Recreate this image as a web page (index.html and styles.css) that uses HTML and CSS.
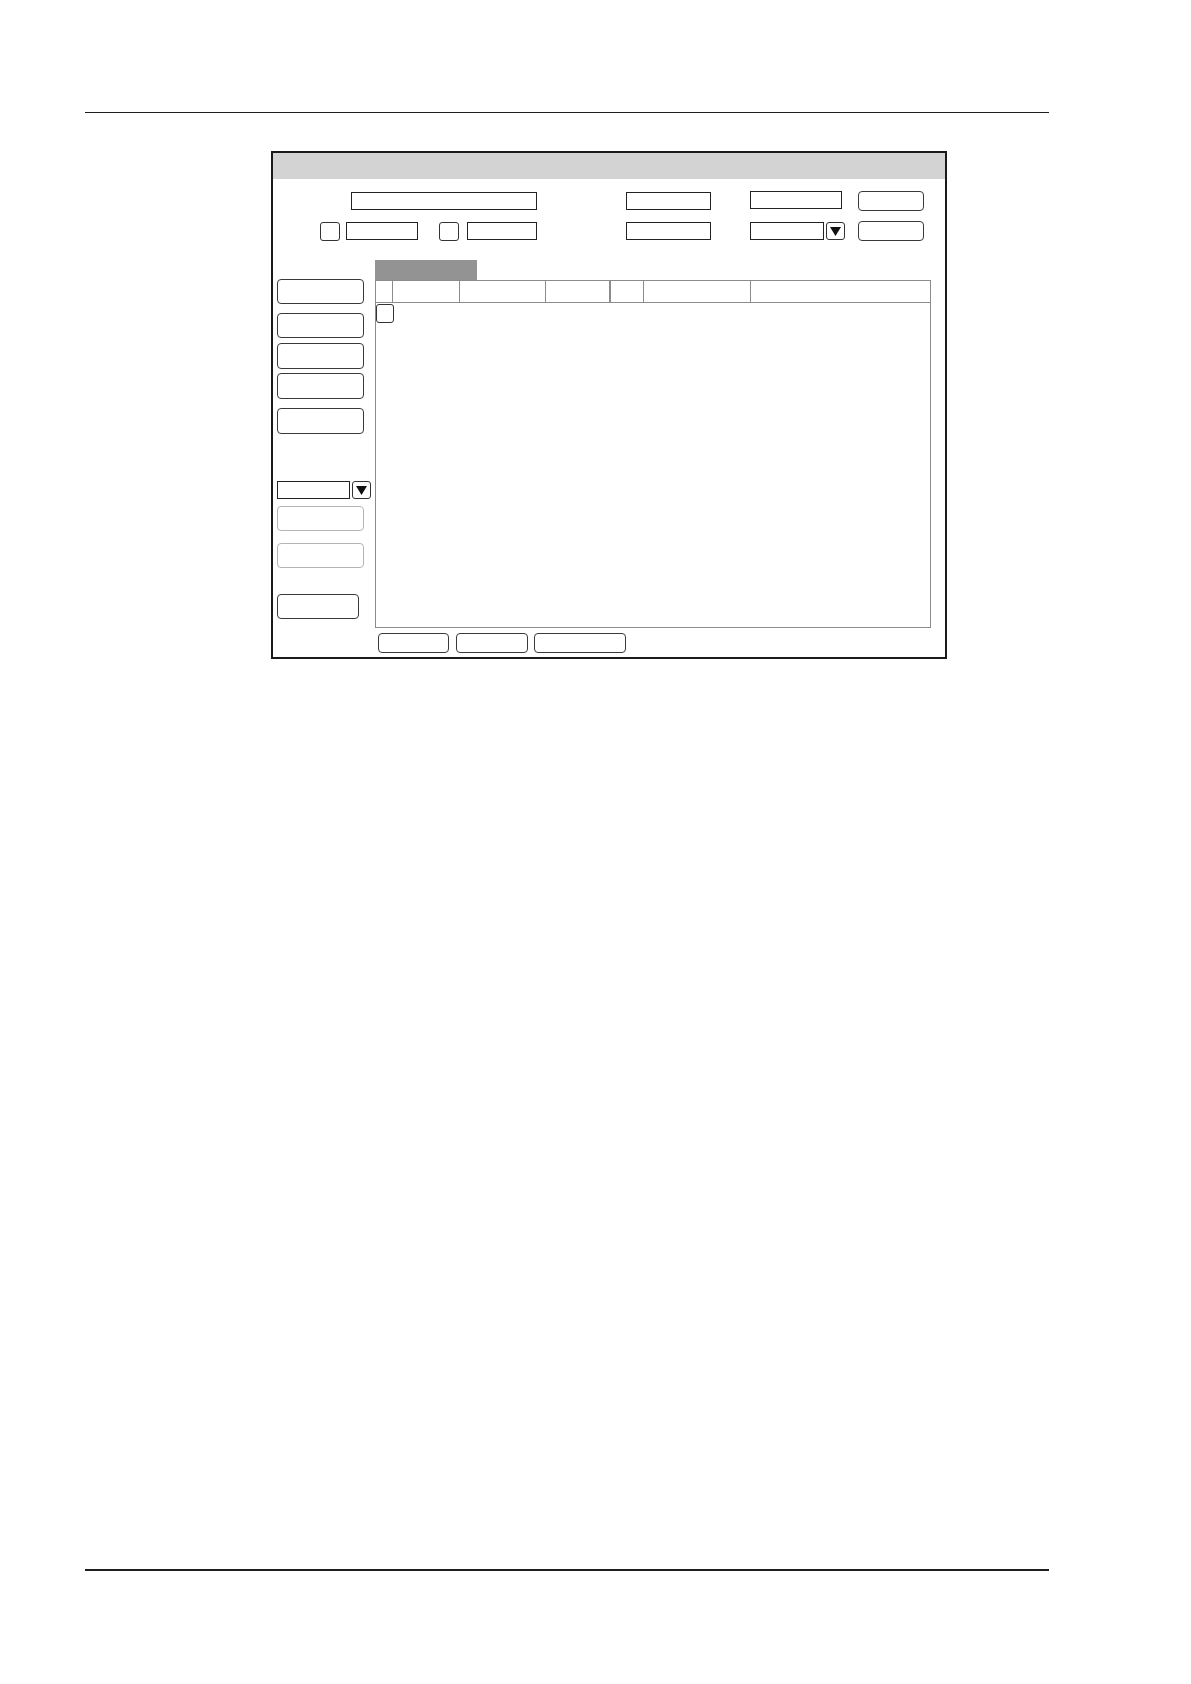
FILE: index.html
```html
<!DOCTYPE html>
<html>
<head>
<meta charset="utf-8">
<link rel="stylesheet" href="styles.css">
</head>
<body>
<div class="page">
  <div class="rule-top"></div>
  <div class="window">
    <div class="titlebar"></div>
    <div class="form">
      <div class="cell c1 r1"><div class="field long"></div></div>
      <div class="cell c1 r2">
        <div class="check"></div><div class="field f72"></div>
        <div class="check second"></div><div class="field f70"></div>
      </div>
      <div class="cell c2 r1"><div class="field f85"></div></div>
      <div class="cell c2 r2"><div class="field f85"></div></div>
      <div class="cell c3 r1"><div class="field f92 up"></div></div>
      <div class="cell c3 r2">
        <div class="field f74"></div>
        <div class="arrow"><svg width="11" height="9" viewBox="0 0 11 9"><polygon points="0,0 11,0 5.5,9" fill="#111"/></svg></div>
      </div>
      <div class="cell c4 r1"><div class="btn b65"></div></div>
      <div class="cell c4 r2"><div class="btn b65"></div></div>
    </div>
    <div class="main">
      <div class="side">
        <div class="btn side-btn s1"></div>
        <div class="btn side-btn s2"></div>
        <div class="btn side-btn s3 tall"></div>
        <div class="btn side-btn s4 tall"></div>
        <div class="btn side-btn s5 tall"></div>
        <div class="combo">
          <div class="field f73"></div>
          <div class="arrow"><svg width="11" height="9" viewBox="0 0 11 9"><polygon points="0,0 11,0 5.5,9" fill="#111"/></svg></div>
        </div>
        <div class="btn side-btn disabled d1"></div>
        <div class="btn side-btn disabled d2"></div>
        <div class="btn side-btn last"></div>
      </div>
      <div class="content">
        <div class="tab"></div>
        <div class="table">
          <div class="thead">
            <div class="th w17"></div>
            <div class="th w67"></div>
            <div class="th w86"></div>
            <div class="th w65 thick"></div>
            <div class="th w33"></div>
            <div class="th w107"></div>
            <div class="th rest"></div>
          </div>
          <div class="row"><div class="check small"></div></div>
        </div>
        <div class="actions">
          <div class="btn a71"></div>
          <div class="btn a72"></div>
          <div class="btn a92"></div>
        </div>
      </div>
    </div>
  </div>
  <div class="rule-bottom"></div>
</div>
</body>
</html>
```

FILE: styles.css
```css
html, body {
  margin: 0;
  padding: 0;
  background: #ffffff;
  font-family: "Liberation Sans", Arial, sans-serif;
}

.page {
  width: 1191px;
  height: 1684px;
  padding-top: 112px;
  box-sizing: border-box;
}

.rule-top {
  margin-left: 85px;
  width: 964px;
  height: 1px;
  background: #1e1e1e;
}

.rule-bottom {
  margin-left: 85px;
  margin-top: 910px;
  width: 964px;
  height: 2px;
  background: #1e1e1e;
}

.window {
  margin-top: 38px;
  margin-left: 271px;
  width: 676px;
  height: 508px;
  border: 2px solid #1a1a1a;
  box-sizing: border-box;
  background: #fff;
}

.titlebar {
  height: 26px;
  background: #d3d3d3;
}

.form {
  display: grid;
  grid-template-columns: 217px 89px 85px 39px 95px 13px 65px;
  grid-template-rows: 20px 20px;
  row-gap: 10px;
  margin-top: 12px;
  margin-left: 47px;
}

.cell {
  display: flex;
  align-items: center;
}

.c1 { grid-column: 1; justify-content: flex-end; }
.c2 { grid-column: 3; }
.c3 { grid-column: 5; }
.c4 { grid-column: 7; }
.r1 { grid-row: 1; }
.r2 { grid-row: 2; }

.field {
  height: 18px;
  border: 1px solid #222;
  box-sizing: border-box;
  background: #fff;
  flex-shrink: 0;
}

.long { width: 186px; }
.f72 { width: 72px; margin-left: 6px; }
.f70 { width: 70px; margin-left: 8px; }
.f85 { width: 85px; }
.f92 { width: 92px; }
.f74 { width: 74px; }
.f73 { width: 73px; }
.up { margin-top: -2px; }

.check {
  width: 20px;
  height: 19px;
  border: 1px solid #333;
  border-radius: 3px;
  box-sizing: border-box;
  background: #fff;
  flex-shrink: 0;
}

.check.second { margin-left: 21px; }

.arrow {
  width: 19px;
  height: 18px;
  margin-left: 2px;
  border: 1px solid #333;
  border-radius: 3px;
  box-sizing: border-box;
  display: flex;
  align-items: center;
  justify-content: center;
  flex-shrink: 0;
}

.arrow svg { margin-top: 1px; }

.btn {
  border: 1px solid #3a3a3a;
  border-radius: 4px;
  box-sizing: border-box;
  background: #fff;
  flex-shrink: 0;
}

.b65 { width: 66px; height: 20px; }

.main {
  display: flex;
  margin-top: 19px;
  padding-left: 4px;
  column-gap: 12px;
}

.side {
  width: 86px;
  flex-shrink: 0;
  display: flex;
  flex-direction: column;
  padding-top: 19px;
}

.side-btn {
  width: 87px;
  height: 25px;
}

.side-btn.tall { height: 26px; }
.s2 { margin-top: 9px; }
.s3 { margin-top: 5px; }
.s4 { margin-top: 4px; }
.s5 { margin-top: 9px; }

.combo {
  display: flex;
  align-items: center;
  margin-top: 47px;
  height: 18px;
  width: 95px;
}

.disabled { border-color: #b4b4b4; }
.d1 { margin-top: 7px; }
.d2 { margin-top: 12px; }

.last {
  width: 82px;
  margin-top: 26px;
}

.content {
  width: 556px;
  display: flex;
  flex-direction: column;
}

.tab {
  width: 102px;
  height: 20px;
  background: #939393;
}

.table {
  height: 348px;
  border: 1px solid #8c8c8c;
  box-sizing: border-box;
}

.thead {
  display: flex;
  height: 22px;
  border-bottom: 1px solid #8c8c8c;
  box-sizing: border-box;
}

.th {
  border-right: 1px solid #8c8c8c;
  box-sizing: border-box;
}

.th.thick { border-right-width: 2px; }
.w17 { width: 17px; }
.w67 { width: 67px; }
.w86 { width: 86px; }
.w65 { width: 65px; }
.w33 { width: 33px; }
.w107 { width: 107px; }
.rest { flex: 1; border-right: none; }

.row {
  padding-top: 1px;
}

.check.small {
  width: 18px;
  height: 19px;
}

.actions {
  display: flex;
  margin-top: 5px;
  margin-left: 3px;
}

.actions .btn { height: 20px; }
.a71 { width: 71px; }
.a72 { width: 72px; margin-left: 7px; }
.a92 { width: 92px; margin-left: 6px; }
```
